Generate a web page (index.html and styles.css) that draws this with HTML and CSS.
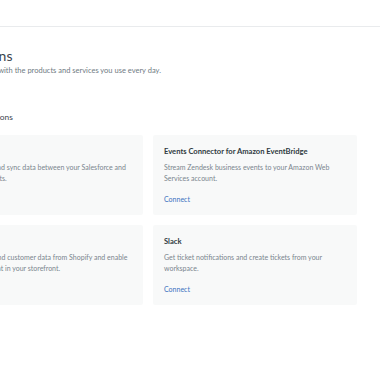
FILE: index.html
```html
<!DOCTYPE html>
<html>
<head>
<meta charset="utf-8">
<link rel="stylesheet" href="styles.css">
</head>
<body>
<header class="topbar"></header>
<main class="page">
  <h1 class="title">Integrations</h1>
  <p class="subtitle">Connect Zendesk with the products and services you use every day.</p>
  <h2 class="section">Popular integrations</h2>
  <div class="grid">
    <div class="card">
      <div class="card-title">Salesforce</div>
      <p class="card-desc">Securely view and sync data between your Salesforce and Zendesk accounts.</p>
      <a class="card-link">Connect</a>
    </div>
    <div class="card">
      <div class="card-title">Events Connector for Amazon EventBridge</div>
      <p class="card-desc">Stream Zendesk business events to your Amazon Web Services account.</p>
      <a class="card-link">Connect</a>
    </div>
    <div class="card">
      <div class="card-title">Shopify</div>
      <p class="card-desc">Access orders and customer data from Shopify and enable Zendesk live chat in your storefront.</p>
      <a class="card-link">Connect</a>
    </div>
    <div class="card">
      <div class="card-title">Slack</div>
      <p class="card-desc">Get ticket notifications and create tickets from your workspace.</p>
      <a class="card-link">Connect</a>
    </div>
  </div>
</main>
</body>
</html>
```

FILE: styles.css
```css
* { box-sizing: border-box; }
html, body { margin: 0; padding: 0; background: #fff; overflow: hidden; }
body {
  font-family: "Lato", "Open Sans", sans-serif;
  color: #2f3941;
  width: 380px;
  height: 380px;
}
.topbar {
  height: 27px;
  border-bottom: 1px solid #e9ebed;
}
.page {
  margin-left: -61px;
  padding-top: 20px;
  width: 480px;
}
.title {
  margin: 0;
  font-size: 14px;
  line-height: 18px;
  font-weight: 400;
  color: #3b454d;
}
.subtitle {
  margin: 0;
  font-size: 7.5px;
  line-height: 12px;
  color: #6f7a83;
}
.section {
  margin: 33px 0 11px;
  font-size: 8.4px;
  line-height: 14px;
  font-weight: 400;
  color: #3b454d;
}
.grid {
  display: grid;
  grid-template-columns: 204px 204px;
  column-gap: 10px;
  row-gap: 10px;
}
.card {
  background: #f8f9f9;
  border-radius: 2px;
  padding: 10px 11px 8px;
  height: 80px;
}
.card-title {
  font-size: 7.6px;
  line-height: 12px;
  font-weight: 700;
  color: #2f3941;
}
.card-desc {
  margin: 5px 0 9px;
  font-size: 7px;
  line-height: 11px;
  color: #7a858e;
}
.card-link {
  display: block;
  font-size: 7px;
  line-height: 12px;
  color: #3a72bf;
}
```
